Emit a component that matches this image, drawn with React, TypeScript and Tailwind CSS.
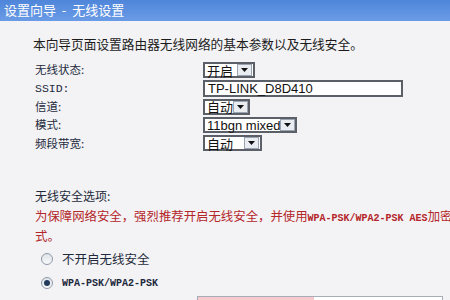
import React from 'react';

const cjk = '"Noto Sans CJK SC", "Liberation Sans", sans-serif';
const mono = '"Liberation Mono", "Noto Sans CJK SC", monospace';

const Arrow: React.FC = () => (
  <div className="flex h-[12px] w-[15px] shrink-0 items-center justify-center border border-[#9aa3b0] bg-[#e9ecf1]">
    <svg width="7" height="4" viewBox="0 0 7 4">
      <path d="M0 0 H7 L3.5 4 Z" fill="#111" />
    </svg>
  </div>
);

const FakeSelect: React.FC<{ label: string; width: string; latin?: boolean }> = ({ label, width, latin }) => (
  <div className={`flex h-[16px] shrink-0 items-center justify-between border-2 border-[#5b6068] bg-white pl-[2px] pr-[1px] ${width}`}>
    <span
      className="text-[13px] leading-none whitespace-nowrap text-[#111]"
      style={{ fontFamily: latin ? '"Liberation Sans", sans-serif' : cjk }}
    >
      {label}
    </span>
    <Arrow />
  </div>
);

const rows = [
  { label: '无线状态:', control: <FakeSelect label="开启" width="w-[52px]" /> },
  {
    label: 'SSID:',
    mono: true,
    control: (
      <div className="flex h-[17px] w-[200px] shrink-0 items-center border-2 border-[#5b6068] bg-white pl-[3px]">
        <span className="text-[13px] leading-none whitespace-nowrap text-[#111]" style={{ fontFamily: '"Liberation Sans", sans-serif' }}>
          TP-LINK_D8D410
        </span>
      </div>
    ),
  },
  { label: '信道:', control: <FakeSelect label="自动" width="w-[47px]" /> },
  { label: '模式:', control: <FakeSelect label="11bgn mixed" width="w-[94px]" latin /> },
  { label: '频段带宽:', control: <FakeSelect label="自动" width="w-[59px]" /> },
];

const Radio: React.FC<{ checked?: boolean }> = ({ checked }) => (
  <div className="flex h-[12px] w-[12px] shrink-0 items-center justify-center rounded-full border border-[#8f99a8] bg-gradient-to-b from-[#dfe3e8] to-[#f8f9fa]">
    {checked && <div className="h-[6px] w-[6px] rounded-full bg-[#223a5c]" />}
  </div>
);

export default function App() {
  return (
    <div className="h-[300px] w-[450px] overflow-hidden bg-[#f3f3f5]" style={{ fontFamily: cjk }}>
      <div className="h-[21px] bg-gradient-to-b from-[#4f86da] to-[#6a9be6] pl-[4px] text-[13px] leading-[20px] whitespace-pre text-white">
        设置向导  -  无线设置
      </div>

      <p className="mt-[15px] ml-[33px] text-[12.7px] leading-[16px] whitespace-nowrap text-[#1c1c1c]">
        本向导页面设置路由器无线网络的基本参数以及无线安全。
      </p>

      <div className="mt-[9px] ml-[35px] flex flex-col">
        {rows.map((r) => (
          <div key={r.label} className="flex h-[18.3px] items-center">
            <div
              className="w-[168px] shrink-0 text-[11.5px] leading-none text-[#1e2a3c]"
              style={{ fontFamily: r.mono ? mono : cjk }}
            >
              {r.label}
            </div>
            {r.control}
          </div>
        ))}
      </div>

      <div className="mt-[34px] ml-[35px] text-[12px] leading-[20px] text-[#1e2a3c]">无线安全选项:</div>
      <div className="ml-[35px] w-[415px] overflow-hidden text-[12.4px] leading-[20px] whitespace-nowrap text-[#b3262a]">
        <div className="h-[20px]">
          为保障网络安全，强烈推荐开启无线安全，并使用
          <span className="text-[10px] leading-[20px] font-bold" style={{ fontFamily: mono }}>
            WPA-PSK/WPA2-PSK AES
          </span>
          加密方
        </div>
        <div className="h-[20px]">式。</div>
      </div>

      <div className="mt-[1px] ml-[41px] flex flex-col">
        <div className="flex h-[24px] items-center gap-[9px]">
          <Radio />
          <span className="text-[12.5px] text-[#1e2a3c]">不开启无线安全</span>
        </div>
        <div className="flex h-[24px] items-center gap-[9px]">
          <Radio checked />
          <span className="text-[10px] font-bold text-[#1e2a3c]" style={{ fontFamily: mono }}>
            WPA-PSK/WPA2-PSK
          </span>
        </div>
      </div>

      <div className="mt-[1px] ml-[197px] flex h-[10px] w-[246px] border border-[#a7adb6] bg-white">
        <div className="w-[116px] bg-[#f7c9cc]" />
      </div>
    </div>
  );
}
